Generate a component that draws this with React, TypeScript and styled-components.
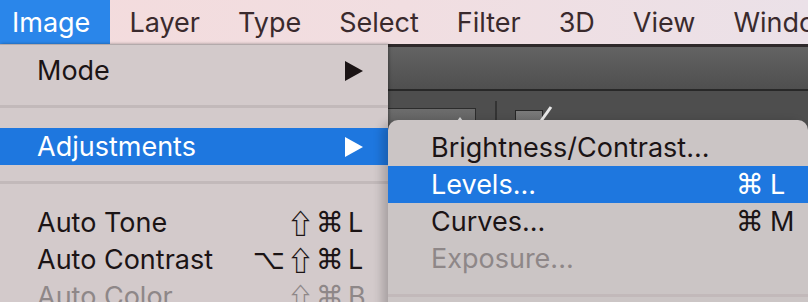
import React from "react";
import styled, { createGlobalStyle } from "styled-components";

const GlobalStyle = createGlobalStyle`
  html, body {
    margin: 0;
    padding: 0;
    background: #4f4f4f;
  }
  body {
    font-family: Inter, "Liberation Sans", "DejaVu Sans", sans-serif;
    -webkit-font-smoothing: antialiased;
  }
`;

const Screen = styled.div`
  position: relative;
  width: 808px;
  height: 302px;
  overflow: hidden;
  display: flex;
  flex-direction: column;
  background: #4f4f4f;
`;

/* ---------- top menu bar ---------- */

const MenuBar = styled.nav`
  flex: none;
  height: 44px;
  display: flex;
  background: linear-gradient(90deg, #f4dbdc 0%, #f1dee1 50%, #ebe1e8 100%);
`;

const BarItem = styled.div<{ $active?: boolean; $first?: boolean }>`
  display: flex;
  align-items: center;
  padding: 0 ${(p) => (p.$first ? 20 : 19)}px 0 ${(p) => (p.$first ? 12 : 19)}px;
  font-size: 27px;
  white-space: nowrap;
  color: ${(p) => (p.$active ? "#ffffff" : "#3a2a2d")};
  background: ${(p) => (p.$active ? "#2a86ea" : "transparent")};
`;

/* ---------- photoshop chrome behind the menus ---------- */

const Workspace = styled.div`
  flex: 1;
  display: flex;
  flex-direction: column;
`;

const AppEdge = styled.div`
  height: 3px;
  background: #2e292a;
`;

const TopStrip = styled.div`
  height: 42px;
  background: linear-gradient(#636363, #4f4f4f);
  border-bottom: 2px solid #282828;
`;

const OptionsBar = styled.div`
  flex: 1;
  display: flex;
  align-items: flex-start;
  background: #4e4e4e;
`;

const PresetBox = styled.div`
  margin: 17px 0 0 300px;
  width: 174px;
  height: 30px;
  position: relative;
  border: 1px solid #2c2c2c;
  background: linear-gradient(#6c6c6c, #5a5a5a);
  &::after {
    content: "";
    position: absolute;
    right: 12px;
    top: 8px;
    border-left: 3px solid transparent;
    border-right: 3px solid transparent;
    border-bottom: 4px solid #d8d8d8;
  }
`;

const VDivider = styled.div`
  margin: 10px 0 0 19px;
  width: 2px;
  height: 40px;
  background: #333333;
`;

const CheckBox = styled.div`
  margin: 19px 0 0 18px;
  width: 26px;
  height: 26px;
  border: 1px solid #262626;
  background: linear-gradient(#7a7a7a, #606060);
`;

const ToolIcons = styled.svg`
  margin: 14px 0 0 -12px;
  flex: none;
`;

/* ---------- menus ---------- */

const MainMenu = styled.div`
  position: absolute;
  top: 44px;
  left: 0;
  width: 388px;
  height: 290px;
  box-sizing: border-box;
  padding-top: 7px;
  background: #d3cacb;
  border-top: 1px solid #b3aaab;
  box-shadow: 1px 0 3px rgba(0, 0, 0, 0.35);
`;

const SubMenu = styled.div`
  position: absolute;
  top: 120px;
  left: 388px;
  width: 420px;
  height: 220px;
  box-sizing: border-box;
  padding-top: 9px;
  background: #cbc5c5;
  border-radius: 10px 10px 0 0;
  box-shadow: -6px 2px 10px rgba(0, 0, 0, 0.2);
`;

const Row = styled.div<{ $active?: boolean; $disabled?: boolean; $inset: number; $end: number }>`
  height: 37px;
  display: flex;
  align-items: center;
  padding: 0 ${(p) => p.$end}px 0 ${(p) => p.$inset}px;
  font-size: 27px;
  white-space: nowrap;
  color: ${(p) => (p.$active ? "#ffffff" : p.$disabled ? "#8e8788" : "#1b1415")};
  background: ${(p) => (p.$active ? "#1e77df" : "transparent")};
`;

const Label = styled.span`
  flex: 1;
`;

const Separator = styled.div<{ $top: number }>`
  height: 3px;
  margin: ${(p) => p.$top}px 0 ${(p) => 36 - p.$top}px;
  background: #c2b9ba;
`;

const Mods = styled.span`
  display: flex;
  align-items: center;
  gap: 4px;
`;

/* DejaVu draws a heavy ⌘/⌥; the CJK face has the wider outlined shift arrow */
const Mod = styled.span<{ $shift?: boolean }>`
  display: inline-flex;
  justify-content: center;
  margin: 0 ${(p) => (p.$shift ? -2 : 0)}px;
  font-family: ${(p) => (p.$shift ? '"Noto Sans CJK JP", "DejaVu Sans"' : '"DejaVu Sans"')}, sans-serif;
  font-size: ${(p) => (p.$shift ? 27 : 28)}px;
  font-weight: ${(p) => (p.$shift ? 700 : 400)};
`;

const Key = styled.span<{ $width: number; $gap: number }>`
  width: ${(p) => p.$width}px;
  margin-left: ${(p) => p.$gap}px;
`;

const Arrow = styled.svg`
  margin-right: 3px;
  fill: currentColor;
`;

type ShortcutProps = { mods: string; k: string; width: number; gap: number };

const Shortcut = ({ mods, k, width, gap }: ShortcutProps) => (
  <>
    <Mods>
      {mods.split("").map((m, i) => (
        <Mod key={i} $shift={m === "⇧"}>
          {m}
        </Mod>
      ))}
    </Mods>
    <Key $width={width} $gap={gap}>
      {k}
    </Key>
  </>
);

const SubArrow = () => (
  <Arrow width="18" height="20" viewBox="0 0 18 20">
    <polygon points="0,0 18,10 0,20" />
  </Arrow>
);

const barItems = ["Layer", "Type", "Select", "Filter", "3D", "View", "Window"];

export default function App() {
  return (
    <Screen>
      <GlobalStyle />
      <MenuBar>
        <BarItem $active $first>
          Image
        </BarItem>
        {barItems.map((t) => (
          <BarItem key={t}>{t}</BarItem>
        ))}
      </MenuBar>

      <Workspace>
        <AppEdge />
        <TopStrip />
        <OptionsBar>
          <PresetBox />
          <VDivider />
          <CheckBox />
          <ToolIcons width="170" height="20" viewBox="0 0 170 20">
            <line x1="20" y1="2" x2="10" y2="16" stroke="#e8e8e8" strokeWidth="3" />
            <rect x="28" y="15" width="5" height="5" fill="#4b8fd8" />
            <rect x="34" y="15" width="5" height="5" fill="#d9894a" />
            <rect x="86" y="16" width="6" height="4" fill="#9aa6c0" />
            <rect x="132" y="16" width="3" height="4" fill="#4b8fd8" />
            <rect x="137" y="16" width="4" height="4" fill="#c99a60" />
          </ToolIcons>
        </OptionsBar>
      </Workspace>

      <MainMenu>
        <Row $inset={37} $end={22}>
          <Label>Mode</Label>
          <SubArrow />
        </Row>
        <Separator $top={16} />
        <Row $inset={37} $end={22} $active>
          <Label>Adjustments</Label>
          <SubArrow />
        </Row>
        <Separator $top={16} />
        <Row $inset={37} $end={22}>
          <Label>Auto Tone</Label>
          <Shortcut mods="⇧⌘" k="L" width={18} gap={4} />
        </Row>
        <Row $inset={37} $end={22}>
          <Label>Auto Contrast</Label>
          <Shortcut mods="⌥⇧⌘" k="L" width={18} gap={4} />
        </Row>
        <Row $inset={37} $end={22} $disabled>
          <Label>Auto Color</Label>
          <Shortcut mods="⇧⌘" k="B" width={18} gap={4} />
        </Row>
      </MainMenu>

      <SubMenu>
        <Row $inset={43} $end={15}>
          <Label>Brightness/Contrast...</Label>
        </Row>
        <Row $inset={43} $end={15} $active>
          <Label>Levels...</Label>
          <Shortcut mods="⌘" k="L" width={23} gap={6} />
        </Row>
        <Row $inset={43} $end={15}>
          <Label>Curves...</Label>
          <Shortcut mods="⌘" k="M" width={23} gap={6} />
        </Row>
        <Row $inset={43} $end={15} $disabled>
          <Label>Exposure...</Label>
        </Row>
        <Separator $top={17} />
      </SubMenu>
    </Screen>
  );
}
